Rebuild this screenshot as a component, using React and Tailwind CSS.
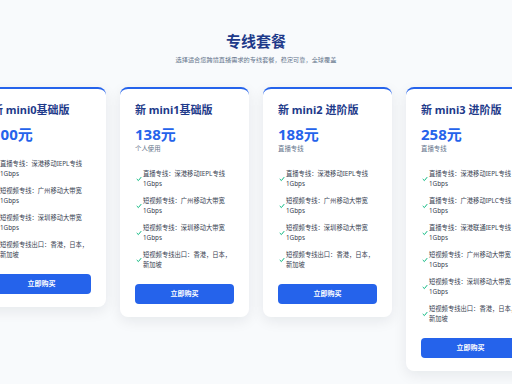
import React from "react";

const plans = [
  {
    name: "新 mini0基础版",
    price: "100元",
    sub: null,
    features: [
      "直播专线：深港移动IEPL专线1Gbps",
      "短视频专线：广州移动大带宽1Gbps",
      "短视频专线：深圳移动大带宽1Gbps",
      "短视频专线出口：香港，日本，新加坡",
    ],
  },
  {
    name: "新 mini1基础版",
    price: "138元",
    sub: "个人使用",
    features: [
      "直播专线：深港移动IEPL专线1Gbps",
      "短视频专线：广州移动大带宽1Gbps",
      "短视频专线：深圳移动大带宽1Gbps",
      "短视频专线出口：香港，日本，新加坡",
    ],
  },
  {
    name: "新 mini2 进阶版",
    price: "188元",
    sub: "直播专线",
    features: [
      "直播专线：深港移动IEPL专线1Gbps",
      "短视频专线：广州移动大带宽1Gbps",
      "短视频专线：深圳移动大带宽1Gbps",
      "短视频专线出口：香港，日本，新加坡",
    ],
  },
  {
    name: "新 mini3 进阶版",
    price: "258元",
    sub: "直播专线",
    features: [
      "直播专线：深港移动IEPL专线1Gbps",
      "直播专线：广港移动IPLC专线1Gbps",
      "直播专线：深港联通IEPL专线1Gbps",
      "短视频专线：广州移动大带宽1Gbps",
      "短视频专线：深圳移动大带宽1Gbps",
      "短视频专线出口：香港，日本，新加坡",
    ],
  },
];

function Check() {
  return (
    <svg width="6" height="6" viewBox="0 0 12 12" className="shrink-0">
      <path d="M2 6.5 L4.8 9.2 L10 2.8" fill="none" stroke="#10b981" strokeWidth="2" strokeLinecap="round" strokeLinejoin="round" />
    </svg>
  );
}

function Card({ plan }) {
  return (
    <div className="w-[129px] shrink-0 bg-white rounded-lg border-t-2 border-[#2563eb] shadow-[0_4px_14px_rgba(15,23,42,0.08)] px-[15px] pt-[13px] pb-[13px] flex flex-col">
      <div className="text-[11px] leading-[16px] font-bold text-[#1e3a8a] whitespace-nowrap">{plan.name}</div>
      <div className="mt-[6px] text-[15px] leading-[20px] font-bold text-[#2563eb]">{plan.price}</div>
      {plan.sub && <div className="text-[6.4px] leading-[10px] text-[#64748b]">{plan.sub}</div>}
      <div className="mt-[15px] flex flex-col gap-[7px]">
        {plan.features.map((f, i) => (
          <div key={i} className="flex items-center">
            <div className="w-[8px] flex items-center pl-[1px]">
              <Check />
            </div>
            <div className="flex-1 text-[6.3px] leading-[10px] text-[#374151]">{f}</div>
          </div>
        ))}
      </div>
      <button className="mt-[14px] h-[20px] w-full rounded-[4px] bg-[#2563eb] text-white text-[7px] font-bold flex items-center justify-center">
        立即购买
      </button>
    </div>
  );
}

export default function App() {
  return (
    <div className="w-full h-[384px] overflow-hidden bg-[#f8fafc] font-['Noto_Sans','Noto_Sans_CJK_SC',sans-serif]">
      <div className="pt-[31px] flex flex-col items-center">
        <div className="text-[15px] leading-[20px] font-bold text-[#1e3a8a]">专线套餐</div>
        <div className="mt-[4px] text-[6.2px] leading-[10px] text-[#64748b]">选择适合您跨境直播需求的专线套餐，稳定可靠，全球覆盖</div>
      </div>
      <div className="mt-[22px] flex justify-center items-start gap-[14px]">
        {plans.map((p, i) => (
          <Card key={i} plan={p} />
        ))}
      </div>
    </div>
  );
}
